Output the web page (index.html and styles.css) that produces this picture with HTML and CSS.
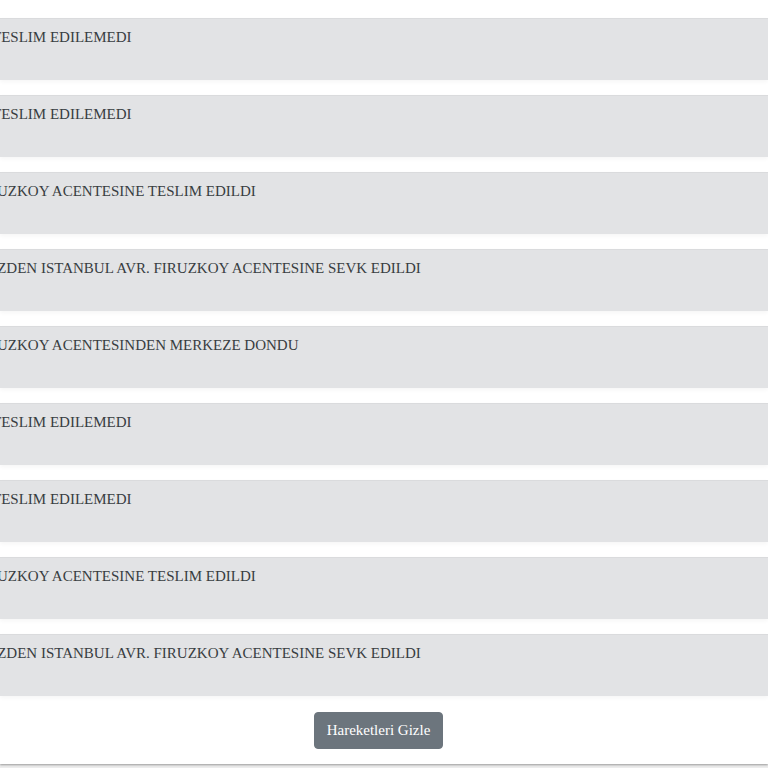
FILE: index.html
```html
<!DOCTYPE html>
<html lang="tr">
<head>
    <meta charset="UTF-8">
    <meta name="viewport" content="width=device-width, initial-scale=1.0">
    <title>Kargo Hareketleri</title>
    <link rel="stylesheet" href="styles.css">
</head>
<body>
    <div class="card">
        <ul class="moves">
            <li class="move">TESLIM EDILEMEDI</li>
            <li class="move">TESLIM EDILEMEDI</li>
            <li class="move move-r">RUZKOY ACENTESINE TESLIM EDILDI</li>
            <li class="move move-e">EZDEN ISTANBUL AVR. FIRUZKOY ACENTESINE SEVK EDILDI</li>
            <li class="move move-r">RUZKOY ACENTESINDEN MERKEZE DONDU</li>
            <li class="move">TESLIM EDILEMEDI</li>
            <li class="move">TESLIM EDILEMEDI</li>
            <li class="move move-r">RUZKOY ACENTESINE TESLIM EDILDI</li>
            <li class="move move-e">EZDEN ISTANBUL AVR. FIRUZKOY ACENTESINE SEVK EDILDI</li>
        </ul>
        <div class="actions">
            <button class="btn">Hareketleri Gizle</button>
        </div>
    </div>
</body>
</html>
```

FILE: styles.css
```css
html, body {
    margin: 0;
    height: 100%;
    overflow: hidden;
}
body {
    font-family: "Liberation Serif", "Times New Roman", serif;
    background: #ececec;
    color: #383d41;
}
.card {
    background: #fff;
    padding: 18px 0 15px;
    box-shadow: 0 1px 2px rgba(0, 0, 0, 0.35);
}
.moves {
    list-style: none;
    margin: 0;
    padding: 0;
    display: flex;
    flex-direction: column;
    gap: 15px;
}
.move {
    background: #e2e3e5;
    border-top: 1px solid #dadbdd;
    box-shadow: 0 2px 4px rgba(0, 0, 0, 0.04);
    height: 51px;
    padding-top: 10px;
    font-size: 15px;
    line-height: 17px;
    text-indent: -8px;
    white-space: nowrap;
    overflow: hidden;
}
.move-r {
    text-indent: -13px;
}
.move-e {
    text-indent: -12px;
}
.actions {
    display: flex;
    justify-content: center;
    padding-right: 11px;
    margin-top: 16px;
}
.btn {
    font-family: "Liberation Serif", "Times New Roman", serif;
    font-size: 15px;
    line-height: 1.5;
    padding: 6px 12px;
    color: #fff;
    background: #6c757d;
    border: 1px solid #6c757d;
    border-radius: 4px;
    cursor: pointer;
}
```
